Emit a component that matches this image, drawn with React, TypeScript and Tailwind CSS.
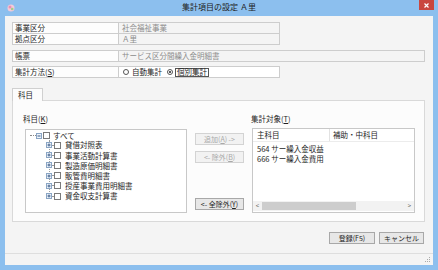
import React from "react";

const treeItems = [
  "貸借対照表",
  "事業活動計算書",
  "製造原価明細書",
  "販管費明細書",
  "授産事業費用明細書",
  "資金収支計算書",
];

function ExpandBox({ open }: { open?: boolean }) {
  return (
    <svg width="6" height="6" viewBox="0 0 6 6" className="shrink-0">
      <rect x="0.5" y="0.5" width="5" height="5" fill="#eef4fb" stroke="#8aa5c4" />
      <path d="M1.5 3H4.5" stroke="#3b5a86" />
      {!open && <path d="M3 1.5V4.5" stroke="#3b5a86" />}
    </svg>
  );
}

function CheckBox() {
  return <div className="w-[7px] h-[7px] border border-[#7a7a7a] bg-white shrink-0" />;
}

function Button({ children, disabled, className }: { children: React.ReactNode; disabled?: boolean; className?: string }) {
  return (
    <div
      className={
        "h-[12px] flex items-center justify-center border text-[7px] leading-none " +
        (disabled
          ? "border-[#d3d3d3] bg-[#f2f2f2] text-[#a9a9a9] "
          : "border-[#a8a8a8] bg-[#e7e7e7] text-[#1e1e1e] ") +
        (className ?? "")
      }
    >
      {children}
    </div>
  );
}

export default function App() {
  return (
    <div className="w-[438px] h-[270px] bg-[#8cbfee] flex flex-col font-['Noto_Sans_CJK_JP',sans-serif] text-[#1e1e1e] overflow-hidden">
      {/* title bar */}
      <div className="h-[16px] relative flex items-center shrink-0">
        <svg width="8" height="8" viewBox="0 0 8 8" className="ml-[7px]">
          <circle cx="4" cy="4" r="3.5" fill="#f3c9d9" />
          <circle cx="3" cy="3" r="1.5" fill="#e891b4" />
          <circle cx="5.2" cy="5" r="1.3" fill="#9dcf8a" />
        </svg>
        <div className="absolute left-0 right-0 top-[2px] text-center text-[8px] leading-[10px] text-[#222]">
          集計項目の設定 Ａ里
        </div>
        <div className="absolute right-[4px] top-0 w-[15px] h-[10px] bg-[#c9473f] flex items-center justify-center">
          <svg width="5" height="5" viewBox="0 0 5 5">
            <path d="M0.5 0.5L4.5 4.5M4.5 0.5L0.5 4.5" stroke="white" strokeWidth="1.2" />
          </svg>
        </div>
      </div>

      {/* body */}
      <div className="flex-1 mx-[5px] mb-[5px] bg-[#f4f4f4] flex flex-col text-[7.5px] leading-none">
        <div className="pl-[7px] pt-[6px] flex flex-col">
          <div className="flex h-[12px]">
            <div className="w-[107px] border border-[#cdcdcd] bg-[#fdfdfd] flex items-center pl-[2px]">事業区分</div>
            <div className="w-[162px] -ml-px border border-[#cdcdcd] flex items-center pl-[3px] text-[#8c8c8c]">社会福祉事業</div>
          </div>
          <div className="flex h-[12px] -mt-px">
            <div className="w-[107px] border border-[#cdcdcd] bg-[#fdfdfd] flex items-center pl-[2px]">拠点区分</div>
            <div className="w-[162px] -ml-px border border-[#cdcdcd] flex items-center pl-[3px] text-[#8c8c8c]">Ａ里</div>
          </div>
          <div className="flex h-[12px] mt-[5px]">
            <div className="w-[107px] border border-[#cdcdcd] bg-[#fdfdfd] flex items-center pl-[2px]">帳票</div>
            <div className="w-[307px] -ml-px border border-[#cdcdcd] flex items-center pl-[3px] text-[#8c8c8c]">サービス区分間繰入金明細書</div>
          </div>
          <div className="flex h-[12px] mt-[4px]">
            <div className="w-[107px] border border-[#cdcdcd] bg-[#fdfdfd] flex items-center pl-[2px]">集計方法(<span className="underline">S</span>)</div>
            <div className="w-[162px] -ml-px border border-[#cdcdcd] bg-white flex items-center pl-[4px]">
              <div className="w-[6px] h-[6px] rounded-full border border-[#555] bg-white" />
              <span className="ml-[3px]">自動集計</span>
              <div className="ml-[5px] w-[6px] h-[6px] rounded-full border border-[#555] bg-white flex items-center justify-center">
                <div className="w-[2px] h-[2px] rounded-full bg-[#222]" />
              </div>
              <span className="ml-[2px] border border-[#555] px-[1px] h-[9px] flex items-center">個別集計</span>
            </div>
          </div>
        </div>

        {/* tabs */}
        <div className="ml-[7px] mt-[10px] w-[413px] flex flex-col">
          <div className="flex h-[13px]">
            <div className="w-[31px] border border-b-0 border-[#d0d0d0] bg-[#fcfcfc] flex items-center pl-[5px] relative z-10 h-[13px]">科目</div>
          </div>
          <div className="-mt-px h-[122px] border border-[#d9d9d9] bg-[#fcfcfc] flex pl-[10px]">
            {/* left column */}
            <div className="flex flex-col pt-[13px]">
              <div className="h-[10px] flex items-center">科目(<span className="underline">K</span>)</div>
              <div className="ml-[2px] mt-[5px] w-[162px] h-[84px] border border-[#c8c8c8] bg-white pt-[1px]">
                <div className="h-[9px] flex items-center pl-[4px] relative">
                  <div className="w-[6px] border-t border-dotted border-[#888]" />
                  <ExpandBox open />
                  <div className="w-[1px]" />
                  <CheckBox />
                  <span className="ml-[3px]">すべて</span>
                </div>
                <div className="relative">
                  <div className="absolute left-[23px] top-0 bottom-[5px] border-l border-dotted border-[#999]" />
                  {treeItems.map((t) => (
                    <div key={t} className="h-[10.2px] flex items-center pl-[20px] relative">
                      <ExpandBox />
                      <div className="w-[2px] border-t border-dotted border-[#999]" />
                      <CheckBox />
                      <span className="ml-[4px]">{t}</span>
                    </div>
                  ))}
                </div>
              </div>
            </div>

            {/* middle buttons */}
            <div className="ml-[8px] w-[49px] flex flex-col pt-[32px]">
              <Button disabled>追加(<span className="underline">A</span>) -&gt;</Button>
              <Button disabled className="mt-[6px]">&lt;- 除外(<span className="underline">B</span>)</Button>
              <Button className="mt-[35px]">&lt;- 全除外(<span className="underline">Y</span>)</Button>
            </div>

            {/* right column */}
            <div className="ml-[7px] flex flex-col pt-[13px]">
              <div className="h-[10px] flex items-center">集計対象(<span className="underline">T</span>)</div>
              <div className="ml-[1px] mt-[4px] w-[163px] h-[85px] border border-[#c8c8c8] bg-white flex flex-col">
                <div className="h-[13px] flex border-b border-[#ececec]">
                  <div className="w-[77px] border-r border-[#e2e2e2] flex items-center pl-[4px]">主科目</div>
                  <div className="flex items-center pl-[3px]">補助・中科目</div>
                </div>
                <div className="pl-[4px] pt-[2px] flex flex-col">
                  <div className="h-[10px] flex items-center">564 サー繰入金収益</div>
                  <div className="h-[10px] flex items-center">666 サー繰入金費用</div>
                </div>
                <div className="mt-auto h-[10px] mb-[1px] flex items-center bg-[#f2f2f2]">
                  <div className="w-[9px] text-center text-[6px] text-[#555]">&lt;</div>
                  <div className="w-[94px] h-[8px] bg-[#cdcdcd]" />
                  <div className="flex-1" />
                  <div className="w-[9px] text-center text-[6px] text-[#555]">&gt;</div>
                </div>
              </div>
            </div>
          </div>
        </div>

        {/* bottom buttons */}
        <div className="mt-[10px] flex justify-end pr-[9px] gap-[4px]">
          <Button className="w-[46px]">登録(F5)</Button>
          <Button className="w-[45px]">キャンセル</Button>
        </div>

        {/* status bar */}
        <div className="mt-auto h-[12px] border-t border-[#dedede] flex justify-end items-end">
          <svg width="6" height="6" viewBox="0 0 6 6" className="mr-[2px] mb-[2px]">
            <rect x="4" y="0" width="1" height="1" fill="#aaa" />
            <rect x="2" y="2" width="1" height="1" fill="#aaa" />
            <rect x="4" y="2" width="1" height="1" fill="#aaa" />
            <rect x="0" y="4" width="1" height="1" fill="#aaa" />
            <rect x="2" y="4" width="1" height="1" fill="#aaa" />
            <rect x="4" y="4" width="1" height="1" fill="#aaa" />
          </svg>
        </div>
      </div>
    </div>
  );
}
